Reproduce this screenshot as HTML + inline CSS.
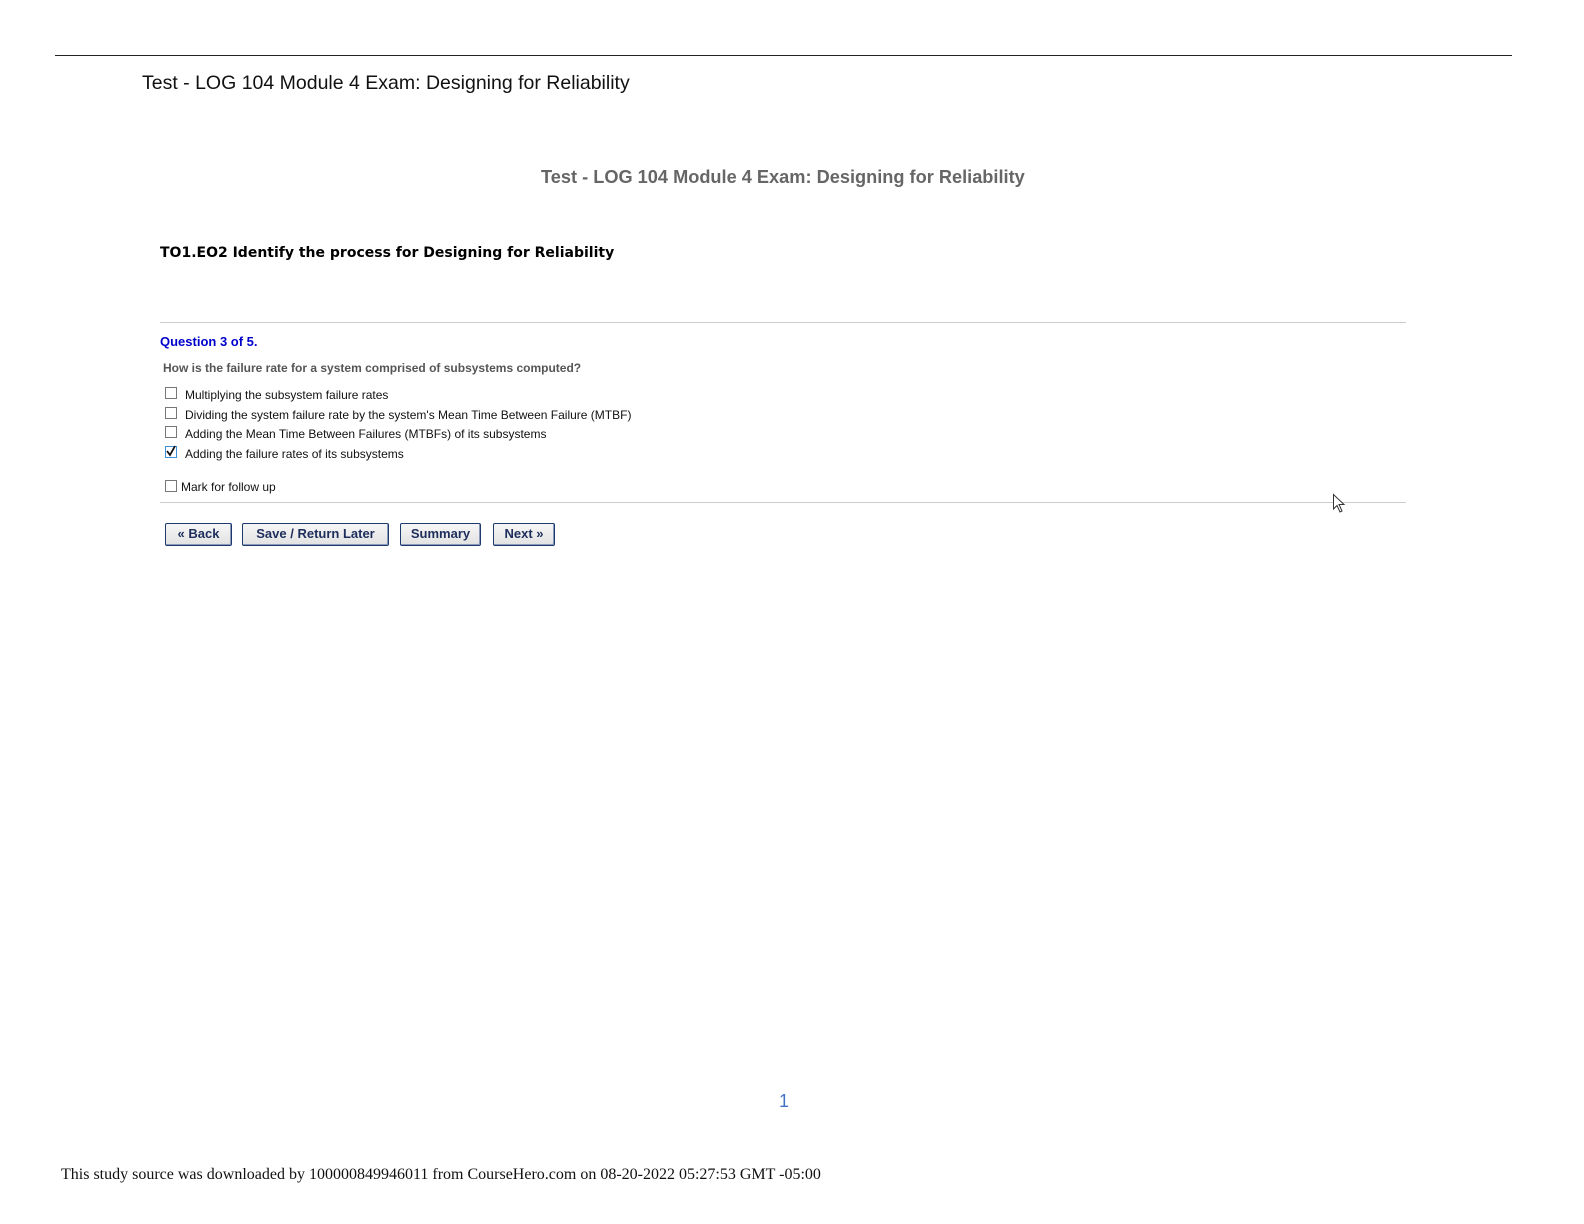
<!DOCTYPE html>
<html><head><meta charset="utf-8"><style>
body{margin:0;width:1584px;height:1224px;background:#fff;position:relative;overflow:hidden;font-family:"Liberation Sans",sans-serif}
.a{position:absolute;white-space:nowrap}
.cb{position:absolute;width:12px;height:12px;border:1px solid #777;background:#fff;box-sizing:border-box}
.opt{position:absolute;font-size:12px;color:#111}
.btn{position:absolute;top:523px;height:23px;box-sizing:border-box;border:1px solid #1d3a6e;border-radius:2px;background:linear-gradient(#f6f6f6,#e2e2e2);color:#1d2e5c;font-weight:bold;font-size:13px;text-align:center;line-height:20px;box-shadow:inset -1px -1px 0 #8a9ab8}
</style></head><body>
<div class="a" style="left:55px;top:55px;width:1457px;height:1px;background:#222"></div>
<div class="a" style="left:142px;top:72px;font-size:19.5px;color:#111">Test - LOG 104 Module 4 Exam: Designing for Reliability</div>
<div class="a" style="left:541px;top:167px;font-size:18.2px;font-weight:bold;color:#666">Test - LOG 104 Module 4 Exam: Designing for Reliability</div>
<div class="a" style="left:160px;top:245px;font-family:'DejaVu Sans',sans-serif;font-size:14px;font-weight:bold;color:#000">TO1.EO2 Identify the process for Designing for Reliability</div>
<div class="a" style="left:160px;top:322px;width:1246px;height:1px;background:#ccc"></div>
<div class="a" style="left:160px;top:334px;font-size:13px;font-weight:bold;color:#0000cc">Question 3 of 5.</div>
<div class="a" style="left:163px;top:361px;font-size:12px;font-weight:bold;color:#555">How is the failure rate for a system comprised of subsystems computed?</div>
<div class="cb" style="left:165px;top:387px"></div><div class="opt a" style="left:185px;top:388px">Multiplying the subsystem failure rates</div>
<div class="cb" style="left:165px;top:407px"></div><div class="opt a" style="left:185px;top:408px">Dividing the system failure rate by the system's Mean Time Between Failure (MTBF)</div>
<div class="cb" style="left:165px;top:426px"></div><div class="opt a" style="left:185px;top:427px">Adding the Mean Time Between Failures (MTBFs) of its subsystems</div>
<div class="cb" style="left:165px;top:446px;border-color:#3a8fd8"><svg width="12" height="12" style="position:absolute;left:-1px;top:-2px"><path d="M2 6 L5 10 L10 1" stroke="#111" stroke-width="1.8" fill="none"/></svg></div><div class="opt a" style="left:185px;top:447px">Adding the failure rates of its subsystems</div>
<div class="cb" style="left:165px;top:480px"></div><div class="opt a" style="left:181px;top:480px">Mark for follow up</div>
<div class="a" style="left:160px;top:502px;width:1246px;height:1px;background:#ccc"></div>
<div class="btn" style="left:165px;width:67px">« Back</div>
<div class="btn" style="left:242px;width:147px">Save / Return Later</div>
<div class="btn" style="left:400px;width:81px">Summary</div>
<div class="btn" style="left:493px;width:62px">Next »</div>
<svg class="a" style="left:1332px;top:493px" width="14" height="22"><path d="M1.5 1.5 L1.5 16 L5 12.5 L8 19 L10 18 L7 11.5 L12 11.5 Z" fill="#fff" stroke="#333" stroke-width="1"/></svg>
<div class="a" style="left:779px;top:1091px;font-size:18px;color:#4472c4">1</div>
<div class="a" style="left:61px;top:1166px;font-family:'Liberation Serif',serif;font-size:16px;color:#111">This study source was downloaded by 100000849946011 from CourseHero.com on 08-20-2022 05:27:53 GMT -05:00</div>
</body></html>
